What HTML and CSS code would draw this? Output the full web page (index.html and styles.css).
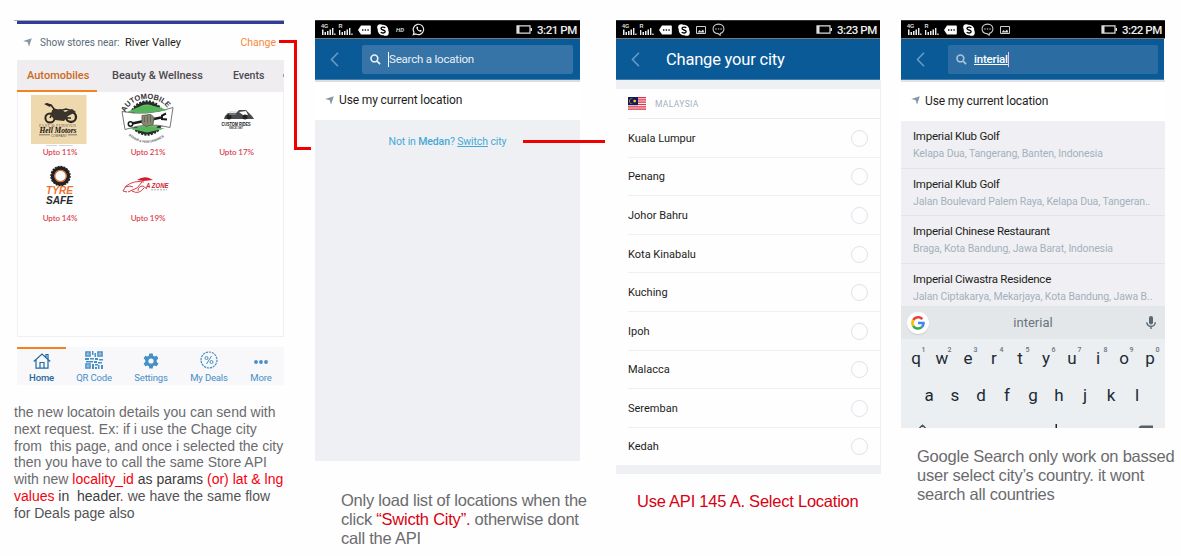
FILE: index.html
```html
<!DOCTYPE html>
<html lang="en">
<head>
<meta charset="utf-8">
<title>Location flow</title>
<link rel="stylesheet" href="styles.css">
</head>
<body>
<svg class="defs" width="0" height="0">
  <symbol id="bars" viewBox="0 0 42 19">
    <path fill="#eee" d="M7 9.500h1.500V15H7zM9.500 12H11v3H9.500zM12 11h1.500v4H12zM14.500 9.500H16V15h-1.500zM17 8h1.400v7H17zM19.200 13.500h1.300V15h-1.300zM24 10h1.300v5H24zM26.500 12H28v3h-1.500zM29 11h1.500v4H29zM31.500 9.500H33V15h-1.500zM34 8h1.400v7H34zM36.300 13.500h1.300V15h-1.300z"/>
  </symbol>
  <symbol id="tag" viewBox="0 0 13 10"><path d="M0 5 3 .5h9a.8.8 0 0 1 .8.8v7.400a.8.8 0 0 1-.8.8H3z" fill="#fff"/><path d="M4 4.300h1.400v1.400H4zM6.700 4.300h1.400v1.400H6.700zM9.400 4.300h1.400v1.400H9.400z" fill="#111"/></symbol>
  <symbol id="skype" viewBox="0 0 12 12"><circle cx="6" cy="6" r="5.300" fill="#fff"/><circle cx="3.300" cy="3.300" r="3.100" fill="#fff"/><circle cx="8.700" cy="8.700" r="3.100" fill="#fff"/><path d="M8.200 4C7.500 2.700 4 2.700 4 4.500c0 2 4.200 1 4.200 3.100C8.200 9.400 4.500 9.400 3.800 8" fill="none" stroke="#000" stroke-width="1.300"/></symbol>
  <symbol id="bubble" viewBox="0 0 12 12"><path d="M6 1c3 0 5 1.900 5 4.400 0 2-1.300 3.700-3.300 4.200L7.500 11.300 5.500 9.800C2.800 9.700 1 7.900 1 5.400 1 2.900 3 1 6 1z" fill="none" stroke="#ccc"/><path d="M3 5h1.300v1H3zM5.400 5h1.300v1H5.400zM7.800 5h1.300v1H7.800z" fill="#ddd"/></symbol>
  <symbol id="photo" viewBox="0 0 10 8"><path d="M.5.500h9v7h-9z" fill="none" stroke="#ccc"/><path d="m1.500 6.500 2-2.500L5 5.500 7 3.500l1.500 3z" fill="#ddd"/></symbol>
  <symbol id="whatsapp" viewBox="0 0 13 13"><path d="M1.300 11.700 2 9.200A5.200 5.200 0 1 1 3.900 11z" fill="none" stroke="#eee" stroke-width="1.200"/><path d="M4.600 3.700c-1 1.500 1.900 5.300 4.300 5 .6-.2.800-.7.800-1.300L8.300 6.800l-.7.700C6.700 7.200 6 6.400 5.700 5.600l.5-.7-.6-1.300z" fill="#fff"/></symbol>
  <symbol id="battery" viewBox="0 0 17 9"><path d="M1 .8h13v7.400H1z" fill="none" stroke="#ddd" stroke-width="1.200"/><path d="M1 1h2.500v7H1zM14.500 3H16v3h-1.500z" fill="#ddd"/></symbol>
  <symbol id="back" viewBox="0 0 9 15"><path d="M8 .8 1.500 7.500 8 14.200" fill="none" stroke="#6a9ac2" stroke-width="1.600"/></symbol>
  <symbol id="search" viewBox="0 0 12 12"><circle cx="4.800" cy="4.800" r="3.700" fill="none" stroke="currentColor" stroke-width="1.800"/><path d="m7.700 7.700 3.300 3.300" stroke="currentColor" stroke-width="2"/></symbol>
  <symbol id="arrow" viewBox="0 0 9 9"><path d="M.2 3 8.800.2 6 8.800 4.700 4.300z" fill="#8798a5"/></symbol>
</svg>

<main class="board">
  <section class="column column-stores">
    <div class="phone-home">
      <div class="strip"></div>
      <div class="near">
        <svg class="near-icon"><use href="#arrow"/></svg>
        <span class="near-label">Show stores near:</span>
        <span class="near-place">River Valley</span>
        <span class="near-change">Change</span>
      </div>
      <div class="tabs">
        <span class="tab tab-on">Automobiles</span><span class="tab tab-beauty">Beauty &amp; Wellness</span><span class="tab tab-events">Events</span><i class="tab-more"></i>
      </div>
      <div class="stores">
        <div class="store">
          <svg viewBox="0 0 88 54">
            <path fill="#eed8ae" d="M13 3h55.500v49H13z"/>
            <g transform="translate(-1 1)">
            <g fill="none" stroke="#2b2722"><circle cx="33" cy="25" r="4.600" stroke-width="2"/><circle cx="54" cy="24" r="5" stroke-width="2.300"/><path d="m33 25 4-9 5 2 7-2 7 2M29 11l5 1 3 4M40 25h14" stroke-width="1.600"/></g>
            <path d="m35 17 9-1 4 3 7-3 4 3-8 4-4 5-9-1-4-4z" fill="#3b342b"/>
            <path d="m27 11 3-1 4 2-1 2z" fill="#2b2722"/>
            <text x="22" y="34" font-size="4.500" textLength="37" fill="#756958" class="lg-serif">FAST &amp; FURIOUS</text>
            <text x="22.500" y="40" font-size="7.500" textLength="37" class="lg-script" fill="#15120f">Hell Motors</text>
            <text x="34" y="43.800" font-size="3" textLength="16" fill="#554b3e">COMPANY</text>
            <path d="M22 41.800h11M51 41.800h9" stroke="#554b3e" stroke-width=".7"/><path d="M29 52.500h11M42 52.500h14" stroke="#ccc" stroke-width=".8"/>
            </g>
          </svg>
          <p>Upto 11%</p>
        </div>
        <div class="store">
          <svg viewBox="0 0 88 54">
            <g transform="translate(-2 -1.500)">
            <path id="arc" d="M22.500 22A23 18.500 0 0 1 66.500 21" fill="none"/>
            <path id="arc2" d="M25.500 45q18 15 37 0" fill="none"/>
            <circle cx="44" cy="27.500" r="16.500" fill="#272c29" stroke="#272c29" stroke-width="2.500" stroke-dasharray="2 1.300"/>
            <circle cx="44" cy="27.500" r="13.500" fill="#6bbd6b"/>
            <path d="M19 21q25 5 51-4l-3 20q-21-6-45 2z" fill="#fff" stroke="#777" stroke-width="1"/>
            <path d="m24 21.500 20 1 21-3-14-4q-13-1-20 3zM26 38q18-3 36 0l-18 4z" fill="#56b45b"/>
            <path d="m29 33 29-6" stroke="#171b19" stroke-width="2.500"/><circle cx="27.500" cy="33.500" r="2.200" fill="none" stroke="#171b19" stroke-width="1.500"/><path d="m63 23-4 2v3.500l5 .5" fill="none" stroke="#171b19" stroke-width="2"/>
            <path d="m39 25 9-1 3 3-1 7-7 2-4-3z" fill="#888773" stroke="#666555"/><path d="M41.500 26v6M44.500 25v7M47.500 25v7" stroke="#5d5c4e" stroke-width=".7"/>
            <text font-size="7.600" font-weight="700" fill="#333"><textPath href="#arc" textLength="50" lengthAdjust="spacingAndGlyphs">AUTOMOBILE</textPath></text>
            <text font-size="3.400" font-weight="700" fill="#666"><textPath href="#arc2" textLength="39" lengthAdjust="spacingAndGlyphs">REPAIR &amp; PERFORMANCE</textPath></text>
            </g>
          </svg>
          <p>Upto 21%</p>
        </div>
        <div class="store">
          <svg viewBox="0 0 88 54">
            <path d="m31 24 3-3h8l3-3h7l3 3 3 3 2 3H30zM45 20l4 3h5l-2-4z" fill="#484a4c"/><circle cx="35" cy="25" r="2.500" fill="#222"/><circle cx="51" cy="25" r="2.500" fill="#222"/><path d="M35 20h8M35 22h7" stroke="#bbb" stroke-width=".8"/>
            <text x="27.500" y="33.700" font-size="5.800" font-weight="700" textLength="29" lengthAdjust="spacingAndGlyphs" fill="#111">CUSTOM RIDES</text>
            <text x="35" y="37.200" font-size="2.800" font-weight="700" textLength="14" fill="#444">SINCE 1987</text>
          </svg>
          <p>Upto 17%</p>
        </div>
        <div class="store">
          <svg viewBox="0 0 88 54">
            <circle cx="42.500" cy="18" r="7.800" fill="none" stroke="#222" stroke-width="3.600"/><circle cx="42.500" cy="18" r="9.600" fill="none" stroke="#222" stroke-width="1.300" stroke-dasharray="2 1"/><circle cx="42.500" cy="18" r="5.700" fill="none" stroke="#d8703c" stroke-width="1.200"/>
            <text x="28" y="35.500" font-size="10" font-weight="700" font-style="italic" textLength="27" lengthAdjust="spacingAndGlyphs" fill="#ed7434">TYRE</text>
            <text x="28" y="45.500" font-size="10" font-weight="700" font-style="italic" textLength="27" lengthAdjust="spacingAndGlyphs" fill="#292b2d">SAFE</text>
          </svg>
          <p>Upto 14%</p>
        </div>
        <div class="store">
          <svg viewBox="0 0 88 54">
            <g transform="translate(-2 0)"><path d="M41 24q-10-2-18 4l-3 5 4 1M22 29q6-2 8 0M25 34l9-4 5-6M29 33q7 4 12-3M35 33q0-5 5-5l4 3" fill="none" stroke="#d8404a" stroke-width="1"/>
            <path d="M34 22q6-4 12-2l4 2-10 1z" fill="#cf1d2b"/></g>
            <text x="41" y="30" font-size="7.500" font-weight="700" font-style="italic" textLength="22.500" lengthAdjust="spacingAndGlyphs" fill="#d3222f">A ZONE</text><path d="M46 31.800h16" stroke="#aaa" stroke-dasharray="2 1"/>
          </svg>
          <p>Upto 19%</p>
        </div>
      </div>
      <nav class="nav">
        <div class="nav-item nav-on"><svg viewBox="0 0 18 16"><path d="M.8 8.500 9 1l8.200 7.500M3 7v8.200h12V7M7 15V9.500h4V15M13 4V1.500h2V6" fill="none" stroke="currentColor" stroke-width="1.200"/></svg><span>Home</span></div>
        <div class="nav-item nav-qr"><svg viewBox="0 0 18 18"><path d="M1 1h4v4H1zM13 1h4v4h-4zM1 13h4v4H1z" fill="none" stroke="currentColor" stroke-width="1.600"/><path d="M2.300 2.300h1.500v1.500H2.300zM14.300 2.300h1.500v1.500h-1.500zM2.300 14.300h1.500v1.500H2.300zM7 0h1.500v4H7zM9.500 2H11v4H9.500zM0 7h4v2H0zM5 7h4v1.500H5zM10 7h3v2h-3zM14 8h4v1.500h-4zM1 10h7v1.400H1zM9 10h3v2H9zM13 11h4v1.500h-4zM7 13h2v5H7zM10 13h3v1.500h-3zM10 16h2v2h-2zM13 14h1.500v4H13zM16 14h2v4h-2z" fill="currentColor"/></svg><span>QR Code</span></div>
        <div class="nav-item nav-set"><svg viewBox="0 0 16 16"><path d="M6.300.5h3.400l.4 2.200 1.500.8 2.100-.8 1.700 2.900-1.700 1.500v1.800l1.700 1.500-1.700 2.900-2.100-.8-1.500.8-.4 2.200H6.300l-.4-2.200-1.500-.8-2.100.8-1.700-2.900 1.700-1.500V7.100L.6 5.600l1.700-2.900 2.100.8 1.500-.8z" fill="currentColor"/><circle cx="8" cy="8" r="2.600" fill="#f8f7fa"/></svg><span>Settings</span></div>
        <div class="nav-item nav-deal"><svg viewBox="0 0 18 18"><circle cx="9" cy="9" r="8" fill="none" stroke="currentColor" stroke-width="1.200" stroke-dasharray="2.300 .8"/><g fill="none" stroke="currentColor"><circle cx="6.500" cy="7" r="1.500"/><circle cx="11.500" cy="11" r="1.500"/><path d="m11.500 5-5 8"/></g></svg><span>My Deals</span></div>
        <div class="nav-item nav-more"><svg viewBox="0 0 14 4"><g fill="currentColor"><circle cx="2" cy="2" r="1.900"/><circle cx="7" cy="2" r="1.900"/><circle cx="12" cy="2" r="1.900"/></g></svg><span>More</span></div>
      </nav>
    </div>
    <p class="note note-small"><span>the new locatoin details you can send with</span><br><span>next request. Ex: if i use the Chage city</span><br><span>from&nbsp; this page, and once i selected the city</span><br><span>then you have to call the same Store API</span><br><span>with new <b>locality_id</b> <em>as params</em> <b>(or) lat &amp; lng</b></span><br><span><b>values</b> <em>in&nbsp; header</em><b>.</b> <i>we have the same flow</i></span><br><span><i>for Deals page also</i></span></p>
  </section>

  <section class="column column-search">
    <div class="status">
      <svg class="s-signal" viewBox="0 0 42 19"><use href="#bars"/><text x="6" y="7.500">4G</text><text x="23.500" y="7.500">R</text></svg><svg class="s-tag"><use href="#tag"/></svg><svg class="s-skype"><use href="#skype"/></svg><span class="s-hd">HD</span><svg class="s-wa"><use href="#whatsapp"/></svg>
      <svg class="s-battery"><use href="#battery"/></svg><time>3:21 PM</time>
    </div>
    <header class="bar">
      <svg class="back"><use href="#back"/></svg>
      <div class="field"><svg class="search"><use href="#search"/></svg><i class="caret"></i><span>Search a location</span></div>
    </header>
    <div class="current"><svg><use href="#arrow"/></svg><span>Use my current location</span></div>
    <div class="blank"><p class="switch">Not in <b>Medan</b>? <u>Switch</u> city</p></div>
    <p class="note"><span>Only load list of locations when the</span><br><span>click <b>“Swicth City”.</b> otherwise dont</span><br><span>call the API</span></p>
  </section>

  <section class="column column-city">
    <div class="status">
      <svg class="s-signal" viewBox="0 0 42 19"><use href="#bars"/><text x="6" y="7.500">4G</text><text x="23.500" y="7.500">R</text></svg><svg class="s-tag"><use href="#tag"/></svg><svg class="s-skype"><use href="#skype"/></svg><svg class="s-photo"><use href="#photo"/></svg><svg class="s-bubble"><use href="#bubble"/></svg>
      <svg class="s-battery"><use href="#battery"/></svg><time>3:23 PM</time>
    </div>
    <header class="bar"><svg class="back"><use href="#back"/></svg><h1>Change your city</h1></header>
    <div class="list">
      <div class="country">
        <svg viewBox="0 0 18 13"><path fill="#f7e9ec" d="M0 0h18v13H0z"/><path d="M0 .6h18M0 2.900h18M0 5.200h18M0 7.500h18M0 9.800h18M0 12.100h18" stroke="#dd3347" stroke-width="1.200"/><path fill="#16185f" d="M0 0h10v8.200H0z"/><path d="M5.500 2a2.500 2.500 0 1 0 0 4.300 2.700 2.700 0 1 1 0-4.300z" fill="#fc0"/><circle cx="6.700" cy="4.100" r="1.400" fill="#fc0"/></svg>
        <span>MALAYSIA</span>
      </div>
      <div class="city"><span>Kuala Lumpur</span><i></i></div>
      <div class="city"><span>Penang</span><i></i></div>
      <div class="city"><span>Johor Bahru</span><i></i></div>
      <div class="city"><span>Kota Kinabalu</span><i></i></div>
      <div class="city"><span>Kuching</span><i></i></div>
      <div class="city"><span>Ipoh</span><i></i></div>
      <div class="city"><span>Malacca</span><i></i></div>
      <div class="city"><span>Seremban</span><i></i></div>
      <div class="city"><span>Kedah</span><i></i></div>
    </div>
    <p class="note note-api">Use API 145 A. Select Location</p>
  </section>

  <section class="column column-results">
    <div class="status">
      <svg class="s-signal" viewBox="0 0 42 19"><use href="#bars"/><text x="6" y="7.500">4G</text><text x="23.500" y="7.500">R</text></svg><svg class="s-tag"><use href="#tag"/></svg><svg class="s-skype"><use href="#skype"/></svg><svg class="s-bubble"><use href="#bubble"/></svg><svg class="s-photo"><use href="#photo"/></svg>
      <svg class="s-battery"><use href="#battery"/></svg><time>3:22 PM</time>
    </div>
    <header class="bar">
      <svg class="back"><use href="#back"/></svg>
      <div class="field"><svg class="search"><use href="#search"/></svg><span class="typed">interial</span><i class="caret"></i></div>
    </header>
    <div class="current"><svg><use href="#arrow"/></svg><span>Use my current location</span></div>
    <div class="results">
      <div class="result"><h2>Imperial Klub Golf</h2><p>Kelapa Dua, Tangerang, Banten, Indonesia</p></div>
      <div class="result"><h2>Imperial Klub Golf</h2><p>Jalan Boulevard Palem Raya, Kelapa Dua, Tangeran..</p></div>
      <div class="result"><h2>Imperial Chinese Restaurant</h2><p>Braga, Kota Bandung, Jawa Barat, Indonesia</p></div>
      <div class="result"><h2>Imperial Ciwastra Residence</h2><p>Jalan Ciptakarya, Mekarjaya, Kota Bandung, Jawa B..</p></div>
    </div>
    <div class="suggest">
      <div class="google"><svg viewBox="0 0 14 14"><g fill="none" stroke-width="2.600"><path d="M11.300 3.100A5.600 5.600 0 0 0 2.200 4.200" stroke="#ea4335"/><path d="M2.200 4.200a5.600 5.600 0 0 0 0 5.600" stroke="#fbbc05"/><path d="M2.200 9.800a5.600 5.600 0 0 0 8.600 1.300" stroke="#34a853"/><path d="M10.800 11.100A5.600 5.600 0 0 0 12.500 7H7" stroke="#4285f4"/></g></svg></div>
      <span>interial</span>
      <svg class="mic" viewBox="0 0 10 14"><rect x="3" y="0" width="4" height="8.500" rx="2" fill="#5a6770"/><path d="M.8 6.300a4.200 4.200 0 0 0 8.400 0M5 10.500V13" fill="none" stroke="#5a6770" stroke-width="1.400"/></svg>
    </div>
    <div class="keys">
      <div class="row"><span>q<sup>1</sup></span><span>w<sup>2</sup></span><span>e<sup>3</sup></span><span>r<sup>4</sup></span><span>t<sup>5</sup></span><span>y<sup>6</sup></span><span>u<sup>7</sup></span><span>i<sup>8</sup></span><span>o<sup>9</sup></span><span>p<sup>0</sup></span></div>
      <div class="row row-home"><span>a</span><span>s</span><span>d</span><span>f</span><span>g</span><span>h</span><span>j</span><span>k</span><span>l</span></div>
      <svg class="row-cut" viewBox="0 0 264 4"><path d="m18.500 4 3-2.700 3 2.700" fill="none" stroke="#45525a" stroke-width="1.400"/><path d="M154.500 0h1.500v4h-1.500z" fill="#1b2a33"/><path d="M237.500 4q1-2.500 2.500-2.500h12V4" fill="#55616a"/></svg>
    </div>
    <p class="note note-google"><span>Google Search only work on bassed</span><br><span>user select city’s country. it wont</span><br><span>search all countries</span></p>
  </section>
</main>

<svg class="links" viewBox="0 0 1181 556"><path d="M279 41.500h16.500V148.500H311M523 141.500h82" fill="none" stroke="#f00000" stroke-width="3"/></svg>
</body>
</html>
```
FILE: styles.css
```css
* { box-sizing: border-box; }
body { margin: 0; width: 1181px; height: 556px; overflow: hidden; position: relative; background: #fefefe; font-family: Roboto, "Liberation Sans", sans-serif; color: #1d1d20; }
p, h1, h2 { margin: 0; font-weight: 400; }
svg { display: block; flex: none; }
.defs { position: absolute; }
.links { position: absolute; left: 0; top: 0; width: 1181px; height: 556px; }
.board { display: grid; grid-template-columns: 301px 301px 285px 280px; padding: 20px 0 0 14px; align-items: start; }
.column-search, .column-city, .column-results { display: flex; flex-direction: column; }

/* Store listing */
.phone-home { width: 270px; padding-left: 3px; display: flex; flex-direction: column; }
.strip { height: 4px; margin-left: -3px; border-top: 1px solid #aaa; background: linear-gradient(90deg, transparent 3px, #2f3c9c 3px); }
.near { height: 36px; display: flex; align-items: center; font-size: 11px; padding: 1px 8px 0 6px; white-space: nowrap; }
.near-icon { width: 9px; height: 9px; margin-right: 8px; }
.near-label { width: 85px; font-size: 10px; color: #596a78; }
.near-place { flex: 1; font-size: 11px; }
.near-change { color: #f58a3c; font-size: 10.500px; }
.tabs { height: 32px; background: #efedf0; display: flex; font-size: 11px; font-weight: 500; line-height: 31px; color: #4a4a4d; white-space: nowrap; overflow: hidden; }
.tab-on { width: 80px; padding-left: 10px; color: #cc6a1c; border-bottom: 2px solid #f58220; }
.tab-beauty { padding-left: 15px; width: 119px; }
.tab-events { padding-left: 17px; width: 67px; font-size: 10.500px; line-height: 32px; }
.tab-more { width: 1px; height: 3px; margin-top: 14px; background: #999; }
.stores { height: 245px; border: solid #f1eff3; border-width: 0 1px 1px; display: grid; grid-template-columns: 87px 89px 88px; grid-template-rows: 66px 66px; }
.store svg { width: 88px; height: 54px; font-family: "Liberation Sans", sans-serif; }
.store p { text-align: center; font: 500 8px/12px Lato, sans-serif; letter-spacing: -.1px; margin-right: 3px; color: #d9343f; }
.lg-serif { font-family: "Liberation Serif", serif; }
.lg-script { font-family: "Liberation Serif", serif; font-weight: 700; font-style: italic; }
.nav { margin-top: 10px; height: 38px; background: #f8f7fa; display: grid; grid-template-columns: 49px 56px 58px 58px 46px; }
.nav-item { display: flex; flex-direction: column; align-items: center; justify-content: flex-end; font-size: 9.500px; line-height: 11px; letter-spacing: -.15px; gap: 3px; padding-bottom: 2px; color: #4590c6; white-space: nowrap; }
.nav-on { color: #22699f; border-top: 2px solid #f58220; font-weight: 500; }
.nav-on svg { width: 18px; height: 16px; }
.nav-qr svg { width: 18px; height: 18px; }
.nav-set svg { width: 16px; height: 16px; }
.nav-deal svg { width: 18px; height: 18px; }
.nav-more { gap: 6px; }
.nav-more svg { width: 14px; height: 4px; margin-bottom: 2px; }

/* Annotations */
.note { font: 16.500px/19.200px "Liberation Sans", sans-serif; letter-spacing: -.23px; color: #6b6b6e; white-space: nowrap; }
.note b { font-weight: 400; color: #d80010; }
.note em { font-style: normal; color: #3d3d40; }
.note i { font-style: normal; color: #545457; }
.note-small { margin-top: 19px; font-size: 14px; line-height: 16.800px; letter-spacing: 0; }
.note-small b { color: #f5000c; }
.column-search .note { margin: 30px 0 0 26px; }
.note-api { margin: 18px 0 0 21px; color: #d80010; }
.note-google { margin: 19px 0 0 16px; }

/* Shared phone chrome */
.status { width: 265px; height: 19px; background: #000; display: flex; align-items: center; border-bottom: 1px solid #777; border-top: 1px solid #333; color: #eee; }
.s-signal { width: 42px; height: 19px; font: 700 5.500px "Liberation Sans", sans-serif; fill: #ddd; }
.s-tag { width: 13px; height: 10px; margin-left: 1px; }
.s-skype { width: 12px; height: 12px; margin-left: 6px; }
.s-hd { width: 23px; padding-left: 7px; font-size: 6px; font-weight: 500; font-style: italic; }
.s-wa { width: 13px; height: 13px; }
.s-photo { width: 10px; height: 8px; margin-left: 6px; }
.s-bubble { width: 13px; height: 13px; margin-left: 6px; }
.s-battery { width: 17px; height: 9px; margin-left: auto; }
.status time { width: 47px; padding-left: 4px; font-size: 11.500px; line-height: 18px; letter-spacing: -.45px; font-weight: 500; white-space: nowrap; }
.bar { width: 265px; height: 41px; background: #0b5a98; border-bottom: 1px solid #427fae; display: flex; align-items: center; }
.back { width: 9px; height: 15px; margin-left: 15px; }
.field { width: 211px; height: 29px; margin-left: 23px; padding-left: 8px; border-radius: 2px; background: #3673a6; display: flex; align-items: center; color: #e8f0f7; font-size: 11.500px; letter-spacing: -.2px; }
.search { width: 11px; height: 11px; }
.caret { width: 1px; height: 15px; background: #fff; margin-left: 7px; }
.bar h1 { font-size: 16.500px; letter-spacing: -.2px; color: #fff; margin-left: 26px; }
.current { width: 265px; height: 40px; background: #fff; border-top: 2px solid #ddd; display: flex; align-items: center; padding: 0 0 2px 10px; font-size: 12px; letter-spacing: -.13px; }
.current svg { width: 9px; height: 9px; margin-right: 5px; }
.blank { width: 265px; height: 341px; background: #eff0f4; padding-top: 15px; }
.switch { text-align: center; font-size: 10.500px; line-height: 14px; letter-spacing: -.12px; color: #45a9d5; }
.switch b { font-weight: 500; }

/* City picker */
.column-city .bar, .column-city .status { width: 264px; }
.list { width: 265px; height: 394px; background: #fefefe; border: solid #eff0f4; border-width: 9px 1px 9px 0; }
.country { height: 30px; margin-left: 12px; border-bottom: 1px solid #e9eaf2; display: flex; align-items: center; font-size: 8.500px; letter-spacing: .35px; color: #a4b2bf; }
.country svg { width: 18px; height: 13px; margin-right: 9px; }
.city { height: 38.600px; margin-left: 12px; padding: 1px 12px 0 0; border-bottom: 1px solid #eeeff5; display: flex; align-items: center; justify-content: space-between; font-size: 11px; }
.city:last-child { border-bottom: 0; height: 37px; }
.city i { width: 17px; height: 17px; border: 1px solid #e0e1ea; border-radius: 50%; }

/* Search results */
.column-results .status, .column-results .current { width: 264px; }
.column-results .bar { width: 263px; }
.column-results .field { background: #2b6da2; width: 210px; }
.column-results .search { color: #a9c4da; }
.typed { margin-left: 7px; color: #fff; font-weight: 500; text-decoration: underline; }
.column-results .caret { margin-left: 0; background: #ecc6ec; }
.column-results .current { height: 41px; border-color: #e4e0e8; }
.results { width: 264px; height: 185px; background: #f0f0f4; }
.result { height: 47.500px; padding: 8px 0 0 12px; border-bottom: 1px solid #e3e4e8; white-space: nowrap; }
.result:last-child { height: 43px; border: 0; }
.result h2 { font-size: 11.500px; line-height: 14px; letter-spacing: -.26px; }
.result p { font-size: 10.500px; line-height: 13px; letter-spacing: -.12px; margin-top: 4px; color: #a3b0bc; }
.suggest { width: 264px; height: 33px; background: #e4e7ea; display: grid; grid-template-columns: 40px 184px 40px; align-items: center; text-align: center; color: #69757d; font-size: 13px; }
.google { width: 22px; height: 22px; margin-left: 6px; border-radius: 50%; background: #fff; box-shadow: 0 1px 1px #ccc; display: grid; place-items: center; }
.google svg { width: 14px; height: 14px; }
.mic { width: 10px; height: 14px; margin-left: 21px; }
.keys { width: 264px; height: 89px; background: #eceff2; overflow: hidden; color: #1b2a33; }
.row { display: flex; height: 37px; padding-left: 2px; align-items: center; }
.row span { flex: 0 0 26px; text-align: center; font-size: 17px; line-height: 36px; position: relative; }
.row sup { position: absolute; left: 18.500px; top: 4px; font-size: 7px; font-weight: 500; line-height: 12px; color: #6a747b; }
.row-home { padding-left: 15px; }
.row-cut { width: 264px; height: 4px; margin-top: 11px; }
```
